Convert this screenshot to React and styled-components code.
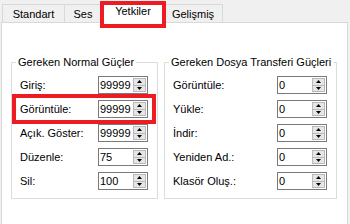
import React from "react";
import styled, { createGlobalStyle } from "styled-components";

const GlobalStyle = createGlobalStyle`
  html, body {
    margin: 0;
    padding: 0;
    background: #f0f0f0;
    font-family: "Liberation Sans", Arial, sans-serif;
    font-size: 11px;
    color: #000;
    overflow: hidden;
  }
`;

const Window = styled.div`
  width: 350px;
  height: 224px;
  background: #f0f0f0;
`;

const TabStrip = styled.div`
  display: flex;
  align-items: flex-end;
  height: 22px;
  padding-left: 2px;
`;

const Tab = styled.div`
  position: relative;
  box-sizing: border-box;
  width: ${(p) => p.$width}px;
  height: ${(p) => (p.$active ? 22 : 18)}px;
  margin: ${(p) => (p.$active ? "0 -2px 0 -2px" : "0 0 0 -1px")};
  margin-bottom: ${(p) => (p.$active ? "-1px" : "0")};
  z-index: ${(p) => (p.$active ? 2 : 1)};
  display: flex;
  align-items: center;
  justify-content: center;
  background: ${(p) => (p.$active ? "#fff" : "#f0f0f0")};
  border: 1px solid #d9d9d9;
  border-bottom: none;
  line-height: 14px;
  padding-bottom: ${(p) => (p.$active ? "3px" : "0")};

  &:first-child {
    margin-left: 0;
  }
`;

const Highlight = styled.div`
  position: absolute;
  top: ${(p) => p.$top}px;
  left: ${(p) => p.$left}px;
  right: ${(p) => p.$right}px;
  bottom: ${(p) => p.$bottom}px;
  border: 4px solid #ed1c24;
  pointer-events: none;
  z-index: 5;
`;

const Panel = styled.div`
  box-sizing: border-box;
  width: 347px;
  height: 210px;
  margin-left: 1px;
  background: #fff;
  border: 1px solid #d9d9d9;
  padding: 32px 0 0 9px;
  display: grid;
  grid-template-columns: 147px 173px;
  column-gap: 6px;
  align-items: start;
`;

const Group = styled.fieldset`
  box-sizing: border-box;
  margin: 0;
  min-width: 0;
  border: 1px solid #dcdcdc;
  padding: 7px 9px 8px 8px;
  display: flex;
  flex-direction: column;
  gap: 6px;
`;

const GroupTitle = styled.legend`
  padding: 0 2px;
  margin-left: -4px;
  line-height: 14px;
  white-space: nowrap;
`;

const Row = styled.div`
  position: relative;
  display: flex;
  align-items: center;
  justify-content: space-between;
  height: 18px;
`;

const Label = styled.span`
  white-space: nowrap;
`;

const Spin = styled.div`
  box-sizing: border-box;
  width: 50px;
  height: 18px;
  border: 1px solid #7a7a7a;
  background: #fff;
  display: flex;
  align-items: stretch;
`;

const SpinValue = styled.span`
  flex: 1;
  padding-left: 1px;
  line-height: 16px;
  overflow: hidden;
`;

const SpinButtons = styled.div`
  width: 13px;
  margin: 1px 1px 1px 0;
  display: flex;
  flex-direction: column;
`;

const SpinButton = styled.div`
  flex: 1;
  box-sizing: border-box;
  background: #e6e6e6;
  border: 1px solid #b9b9b9;
  margin-top: ${(p) => (p.$down ? "-1px" : "0")};
  display: flex;
  align-items: center;
  justify-content: center;
`;

const Arrow = ({ down }) => (
  <svg width="5" height="3" viewBox="0 0 5 3">
    {down ? (
      <polygon points="0,0 5,0 2.5,3" fill="#000" />
    ) : (
      <polygon points="0,3 5,3 2.5,0" fill="#000" />
    )}
  </svg>
);

const SpinBox = ({ value }) => (
  <Spin>
    <SpinValue>{value}</SpinValue>
    <SpinButtons>
      <SpinButton>
        <Arrow />
      </SpinButton>
      <SpinButton $down>
        <Arrow down />
      </SpinButton>
    </SpinButtons>
  </Spin>
);

const tabs = [
  { name: "Standart", width: 63 },
  { name: "Ses", width: 38 },
  { name: "Yetkiler", width: 66, active: true },
  { name: "Gelişmiş", width: 60 },
];

const normal = [
  { label: "Giriş:", value: "99999" },
  { label: "Görüntüle:", value: "99999", marked: true },
  { label: "Açık. Göster:", value: "99999" },
  { label: "Düzenle:", value: "75" },
  { label: "Sil:", value: "100" },
];

const transfer = [
  { label: "Görüntüle:", value: "0" },
  { label: "Yükle:", value: "0" },
  { label: "İndir:", value: "0" },
  { label: "Yeniden Ad.:", value: "0" },
  { label: "Klasör Oluş.:", value: "0" },
];

const App = () => {
  return (
    <Window>
      <GlobalStyle />
      <TabStrip>
        {tabs.map((t) => (
          <Tab key={t.name} $width={t.width} $active={t.active}>
            {t.name}
            {t.active && (
              <Highlight $top={-1} $left={-1} $right={-1} $bottom={-5} />
            )}
          </Tab>
        ))}
      </TabStrip>
      <Panel>
        <Group>
          <GroupTitle>Gereken Normal Güçler</GroupTitle>
          {normal.map((r) => (
            <Row key={r.label}>
              <Label>{r.label}</Label>
              <SpinBox value={r.value} />
              {r.marked && (
                <Highlight $top={-6} $left={-8} $right={-8} $bottom={-6} />
              )}
            </Row>
          ))}
        </Group>
        <Group>
          <GroupTitle>Gereken Dosya Transferi Güçleri</GroupTitle>
          {transfer.map((r) => (
            <Row key={r.label}>
              <Label>{r.label}</Label>
              <SpinBox value={r.value} />
            </Row>
          ))}
        </Group>
      </Panel>
    </Window>
  );
};

export default App;
